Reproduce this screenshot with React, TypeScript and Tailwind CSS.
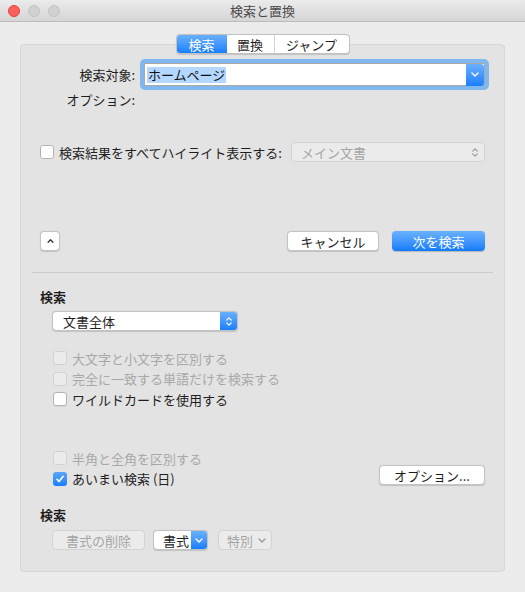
import React from "react";

// macOS-style Find & Replace sheet (検索と置換), fixed 525x592 window.

function Chevron({ className = "" }: { className?: string }) {
  return (
    <svg viewBox="0 0 8 5" className={className} fill="none" stroke="currentColor" strokeWidth="1.4" strokeLinecap="round" strokeLinejoin="round">
      <path d="M1 1l3 3 3-3" />
    </svg>
  );
}

function Stepper({ className = "" }: { className?: string }) {
  return (
    <svg viewBox="0 0 8 12" className={className} fill="none" stroke="currentColor" strokeWidth="1.3" strokeLinecap="round" strokeLinejoin="round">
      <path d="M1.5 4.5L4 2l2.5 2.5M1.5 7.5L4 10l2.5-2.5" />
    </svg>
  );
}

function Check({
  label,
  checked = false,
  disabled = false,
}: {
  label: string;
  checked?: boolean;
  disabled?: boolean;
}) {
  return (
    <div className="flex h-[20.5px] items-center gap-[5px]">
      {checked ? (
        <span className="flex h-[14px] w-[14px] items-center justify-center rounded-[3px] bg-gradient-to-b from-[#5aa6fb] to-[#137efb]">
          <svg viewBox="0 0 10 10" className="h-[10px] w-[10px]" fill="none" stroke="white" strokeWidth="1.7" strokeLinecap="round" strokeLinejoin="round">
            <path d="M2 5.3l2 2.2L8 2.5" />
          </svg>
        </span>
      ) : (
        <span
          className={
            disabled
              ? "h-[14px] w-[14px] rounded-[3px] border border-[#d2d2d2] bg-[#ebebeb]"
              : "h-[14px] w-[14px] rounded-[3px] border border-[#b4b4b4] bg-white shadow-[0_0.5px_0.5px_rgba(0,0,0,0.1)]"
          }
        />
      )}
      <span className={disabled ? "text-[#a8a8a8]" : "text-[#1e1e1e]"}>{label}</span>
    </div>
  );
}

function Button({ children, className = "" }: { children: React.ReactNode; className?: string }) {
  return (
    <div
      className={
        "flex h-[20px] items-center justify-center rounded-[4px] border border-[#c4c4c4] bg-white text-[#1e1e1e] shadow-[0_0.5px_1px_rgba(0,0,0,0.15)] " +
        className
      }
    >
      {children}
    </div>
  );
}

export default function App() {
  return (
    <div className="flex h-[592px] w-[525px] flex-col bg-[#ececec] font-[family-name:'Noto_Sans_CJK_JP',sans-serif] text-[13px] leading-none text-[#1e1e1e]">
      {/* title bar */}
      <div className="relative flex h-[22px] shrink-0 items-center justify-center border-b border-[#bcbcbc] bg-gradient-to-b from-[#ebebeb] to-[#d5d5d5]">
        <div className="absolute left-[8px] top-[5px] flex gap-[8px]">
          <span className="h-[12px] w-[12px] rounded-full border border-[#e0443e] bg-[#fc605c]" />
          <span className="h-[12px] w-[12px] rounded-full border border-[#c3c3c3] bg-[#d1d1d1]" />
          <span className="h-[12px] w-[12px] rounded-full border border-[#c3c3c3] bg-[#d1d1d1]" />
        </div>
        <span className="text-[13px] text-[#4a4a4a]">検索と置換</span>
      </div>

      {/* tabs */}
      <div className="relative z-10 mt-[12px] flex justify-center">
        <div className="flex h-[20px] overflow-hidden rounded-[4px] border border-[#c2c2c2] bg-white shadow-[0_0.5px_1px_rgba(0,0,0,0.15)]">
          <div className="flex w-[50px] items-center justify-center bg-gradient-to-b from-[#69b0fd] to-[#157ffb] text-white">検索</div>
          <div className="flex w-[48px] items-center justify-center border-r border-[#d6d6d6]">置換</div>
          <div className="flex w-[74px] items-center justify-center">ジャンプ</div>
        </div>
      </div>

      {/* panel */}
      <div className="mx-[20px] -mt-[10px] flex h-[528px] flex-col rounded-[4px] border border-[#d6d6d6] bg-[#e3e3e3]">
        <div className="mt-[14px] flex items-center">
          <span className="w-[114px] text-right">検索対象:</span>
          <div className="ml-[5px] rounded-[5px] bg-[#80b7ef] p-[4px]">
            <div className="flex h-[23px] w-[341px] items-center border border-[#a9a9a9] bg-white pl-[2px]">
              <span className="flex h-[16px] items-center bg-[#b3d7ff] px-[1px] text-[#111]">ホームページ</span>
              <div className="ml-auto flex h-[22px] w-[18px] items-center justify-center rounded-r-[3px] bg-gradient-to-b from-[#69b0fd] to-[#157ffb] text-white">
                <Chevron className="h-[5px] w-[8px]" />
              </div>
            </div>
          </div>
        </div>

        <div className="flex h-[19px] items-center">
          <span className="w-[114px] text-right">オプション:</span>
        </div>

        <div className="mt-[33px] flex items-center pl-[19px] pr-[19px]">
          <span className="h-[14px] w-[14px] rounded-[3px] border border-[#b4b4b4] bg-white" />
          <span className="ml-[5px]">検索結果をすべてハイライト表示する:</span>
          <div className="ml-auto flex h-[20px] w-[194px] items-center rounded-[4px] border border-[#d3d3d3] bg-[#ebebeb] pl-[9px] pr-[5px] text-[#a5a5a5]">
            メイン文書
            <Stepper className="ml-auto h-[11px] w-[8px] text-[#9a9a9a]" />
          </div>
        </div>

        <div className="mt-[69px] flex items-center pl-[19px] pr-[19px]">
          <Button className="w-[20px]">
            <svg viewBox="0 0 8 5" className="h-[4px] w-[7px]" fill="none" stroke="#333" strokeWidth="1.6" strokeLinecap="round" strokeLinejoin="round">
              <path d="M1 4l3-3 3 3" />
            </svg>
          </Button>
          <Button className="ml-auto w-[92px]">キャンセル</Button>
          <div className="ml-[13px] flex h-[20px] w-[93px] items-center justify-center rounded-[4px] bg-gradient-to-b from-[#6ab2fd] to-[#0f7bfb] text-white shadow-[0_0.5px_1px_rgba(0,0,0,0.2)]">
            次を検索
          </div>
        </div>

        <div className="mx-[11px] mt-[21px] h-px bg-[#cbcbcb]" />

        <div className="mt-[14px] flex h-[18px] items-center pl-[19px] font-bold">検索</div>

        <div className="mt-[6px] pl-[31px]">
          <div className="flex h-[20px] w-[186px] items-center overflow-hidden rounded-[4px] border border-[#c2c2c2] bg-white pl-[10px] shadow-[0_0.5px_1px_rgba(0,0,0,0.15)]">
            文書全体
            <div className="ml-auto flex h-full w-[17px] items-center justify-center bg-gradient-to-b from-[#69b0fd] to-[#157ffb] text-white">
              <Stepper className="h-[11px] w-[8px]" />
            </div>
          </div>
        </div>

        <div className="mt-[17px] flex flex-col pl-[32px]">
          <Check label="大文字と小文字を区別する" disabled />
          <Check label="完全に一致する単語だけを検索する" disabled />
          <Check label="ワイルドカードを使用する" />
        </div>

        <div className="mt-[38.5px] flex pl-[32px] pr-[19px]">
          <div className="flex flex-col">
            <Check label="半角と全角を区別する" disabled />
            <Check label="あいまい検索 (日)" checked />
          </div>
          <Button className="ml-auto mt-[17px] w-[106px]">オプション...</Button>
        </div>

        <div className="mt-[16px] flex h-[18px] items-center pl-[19px] font-bold">検索</div>

        <div className="mt-[7px] flex items-center pl-[31px]">
          <div className="flex h-[20px] w-[93px] items-center justify-center rounded-[4px] border border-[#d3d3d3] bg-[#ebebeb] text-[#a5a5a5]">
            書式の削除
          </div>
          <div className="ml-[8px] flex h-[20px] w-[55px] items-center overflow-hidden rounded-[4px] border border-[#c2c2c2] bg-white pl-[9px] shadow-[0_0.5px_1px_rgba(0,0,0,0.15)]">
            書式
            <div className="ml-auto flex h-full w-[16px] items-center justify-center bg-gradient-to-b from-[#69b0fd] to-[#157ffb] text-white">
              <Chevron className="h-[5px] w-[8px]" />
            </div>
          </div>
          <div className="ml-[10px] flex h-[20px] w-[54px] items-center rounded-[4px] border border-[#d3d3d3] bg-[#ebebeb] pl-[8px] pr-[5px] text-[#a5a5a5]">
            特別
            <Chevron className="ml-auto h-[5px] w-[8px] text-[#9a9a9a]" />
          </div>
        </div>
      </div>
    </div>
  );
}
